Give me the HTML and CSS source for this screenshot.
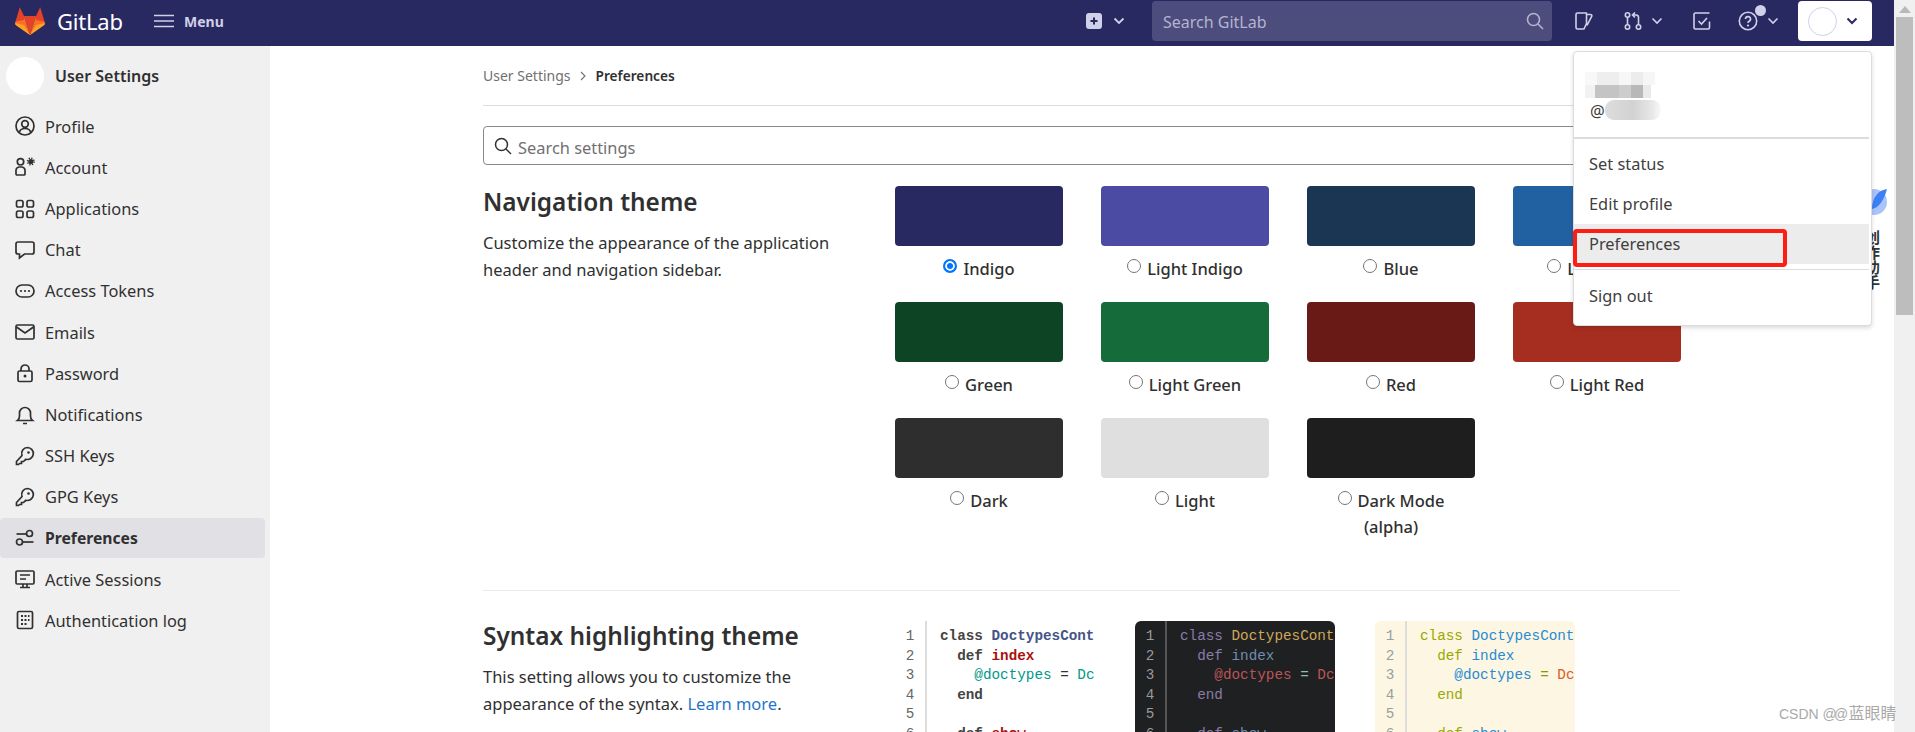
FILE: index.html
```html
<!DOCTYPE html>
<html lang="en">
<head>
<meta charset="utf-8">
<title>Preferences · GitLab</title>
<link rel="stylesheet" href="styles.css">
</head>
<body>
<div class="window">
  <div class="viewport">
    <header class="topbar">
      <div class="brand">
        <svg class="logo" viewBox="0 0 32 30" width="32" height="30"><path d="M16 29 22 10H10Z" fill="#e24329"/><path d="M16 29 10 10 1.5 15.5C.8 17 1 18.5 2.500 19.600Z" fill="#fc6d26"/><path d="M16 29 22 10 30.500 15.500C31.200 17 31 18.500 29.500 19.600Z" fill="#fc6d26"/><path d="M16 29 10 19 1.300 17C1 18 1.500 19 2.500 19.600Z" fill="#fca326"/><path d="M16 29 22 19 30.700 17C31 18 30.500 19 29.500 19.600Z" fill="#fca326"/><path d="M1.500 15.500 5.800 1.300 10 10 10 14Z" fill="#e24329"/><path d="M30.500 15.500 26.200 1.300 22 10 22 14Z" fill="#e24329"/></svg>
        <span class="wordmark">GitLab</span>
      </div>
      <div class="menu-btn">
        <svg width="20" height="14" viewBox="0 0 20 14"><path d="M0 1.500H20M0 7H20M0 12.500H20" stroke="#d1d0e9" stroke-width="1.600" fill="none"/></svg>
        <span>Menu</span>
      </div>
      <div class="top-right">
        <div class="new-btn">
          <svg width="16" height="16" viewBox="0 0 16 16"><rect width="16" height="16" rx="3" fill="#d1d0e9"/><path d="M8 4.500V11.500M4.500 8H11.500" stroke="#292961" stroke-width="2"/></svg>
          <svg class="chev" width="12" height="8" viewBox="0 0 12 8"><path d="M1.500 1.500 6 6l4.500-4.500" stroke="#d1d0e9" stroke-width="1.800" fill="none"/></svg>
        </div>
        <div class="global-search">
          <span>Search GitLab</span>
          <svg width="18" height="18" viewBox="0 0 18 18"><circle cx="7.500" cy="7.500" r="6" stroke="#b5b4cf" stroke-width="1.600" fill="none"/><path d="M12 12l5 5" stroke="#b5b4cf" stroke-width="1.600"/></svg>
        </div>
        <svg class="i-issue" width="18" height="18" viewBox="0 0 18 18"><path d="M1 2.500A1.500 1.500 0 0 1 2.500 1H11.500V11.500L9 17H2.500A1.500 1.500 0 0 1 1 15.500ZM11.500 2.500H15.500A1.300 1.300 0 0 1 16.800 4.200L12 13.500" stroke="#d1d0e9" stroke-width="1.600" stroke-linejoin="round" fill="none"/></svg>
        <div class="mr">
          <svg width="18" height="18" viewBox="0 0 18 18"><g stroke="#d1d0e9" stroke-width="1.600" fill="none"><circle cx="3.500" cy="3" r="2.200"/><circle cx="3.500" cy="15" r="2.200"/><circle cx="14.500" cy="15" r="2.200"/><path d="M3.500 5.200V12.800M14.500 12.800V5.500A2.500 2.500 0 0 0 12 3H9M11 .5 8.500 3 11 5.500"/></g></svg>
          <svg class="chev" width="12" height="8" viewBox="0 0 12 8"><path d="M1.500 1.500 6 6l4.500-4.500" stroke="#d1d0e9" stroke-width="1.600" fill="none"/></svg>
        </div>
        <svg class="i-todo" width="18" height="18" viewBox="0 0 18 18"><path d="M16.500 9.500v6a1.500 1.500 0 0 1-1.500 1.500H2.500A1.500 1.500 0 0 1 1 15.500V2.500A1.500 1.500 0 0 1 2.500 1H16.500M5.500 9l3 3L14 6" stroke="#d1d0e9" stroke-width="1.600" fill="none"/></svg>
        <div class="help">
          <svg width="20" height="20" viewBox="0 0 20 20"><circle cx="10" cy="10" r="8.700" stroke="#d1d0e9" stroke-width="1.600" fill="none"/><path d="M7.500 8a2.500 2.500 0 1 1 3.600 2.300c-.8.400-1.100.9-1.100 1.700" stroke="#d1d0e9" stroke-width="1.700" fill="none"/><circle cx="10" cy="14.500" r="1.100" fill="#d1d0e9"/></svg>
          <span class="help-dot"></span>
          <svg class="chev" width="12" height="8" viewBox="0 0 12 8"><path d="M1.500 1.500 6 6l4.500-4.500" stroke="#d1d0e9" stroke-width="1.600" fill="none"/></svg>
        </div>
        <div class="user-btn">
          <span class="user-avatar"></span>
          <svg width="12" height="8" viewBox="0 0 12 8"><path d="M1.500 1.500 6 6l4.500-4.500" stroke="#292961" stroke-width="2" fill="none"/></svg>
        </div>
      </div>
    </header>
    <div class="below">
      <aside class="sidebar">
        <div class="side-head"><span class="side-avatar"></span><span>User Settings</span></div>
        <nav class="side-nav">
          <a class="nav-item"><svg viewBox="0 0 20 20"><circle cx="10" cy="10" r="9"/><circle cx="10" cy="8" r="3.300"/><path d="M4.200 16.500C5 13.500 7 12.500 10 12.500s5 1 5.800 4"/></svg>Profile</a>
          <a class="nav-item"><svg viewBox="0 0 20 20"><circle cx="5.500" cy="4.800" r="3.200"/><path d="M1 17v-4a3.500 3.500 0 0 1 3-3h3a3.500 3.500 0 0 1 3 3v4a1 1 0 0 1-1 1H2a1 1 0 0 1-1-1Z"/><circle class="solid" cx="15.800" cy="4.500" r="2.600"/><circle class="gear" cx="15.800" cy="4.500" r="3.300"/></svg>Account</a>
          <a class="nav-item"><svg viewBox="0 0 20 20"><rect x="1.500" y="1.500" width="6.500" height="6.500" rx="1.800"/><rect x="12" y="1.500" width="6.500" height="6.500" rx="1.800"/><rect x="1.500" y="12" width="6.500" height="6.500" rx="1.800"/><rect x="12" y="12" width="6.500" height="6.500" rx="1.800"/></svg>Applications</a>
          <a class="nav-item"><svg viewBox="0 0 20 20"><path d="M3 2h14a2 2 0 0 1 2 2v8a2 2 0 0 1-2 2H9.500L4.500 18v-4H3a2 2 0 0 1-2-2V4a2 2 0 0 1 2-2Z"/></svg>Chat</a>
          <a class="nav-item"><svg viewBox="0 0 20 20"><rect x="1" y="4" width="18" height="12" rx="6"/><circle class="solid" cx="6" cy="10" r="1.100"/><circle class="solid" cx="10" cy="10" r="1.100"/><circle class="solid" cx="14" cy="10" r="1.100"/></svg>Access Tokens</a>
          <a class="nav-item"><svg viewBox="0 0 20 20"><rect x="1" y="3" width="18" height="14" rx="1.500"/><path d="M1.500 5 10 11l8.500-6"/></svg>Emails</a>
          <a class="nav-item"><svg viewBox="0 0 20 20"><rect x="3" y="8" width="14" height="10.500" rx="1.500"/><path d="M6 8V6a4 4 0 0 1 8 0v2"/><circle class="solid" cx="10" cy="13" r="1.500"/></svg>Password</a>
          <a class="nav-item"><svg viewBox="0 0 20 20"><path d="M2.500 15.500c1.500-1 2-2.500 2-4.500V8a5.500 5.500 0 0 1 11 0v3c0 2 .5 3.500 2 4.500ZM8 18.500h4"/></svg>Notifications</a>
          <a class="nav-item"><svg viewBox="0 0 20 20"><path d="M12.500 1.500a6 6 0 1 1-1.700 11.800L8.500 15.500H6.500V17.500H4.500L3.500 18.500H1.500V15.500L7 9.500A6 6 0 0 1 12.500 1.500Z"/><circle class="solid" cx="13.500" cy="6.500" r="1.300"/></svg>SSH Keys</a>
          <a class="nav-item"><svg viewBox="0 0 20 20"><path d="M12.500 1.500a6 6 0 1 1-1.700 11.800L8.500 15.500H6.500V17.500H4.500L3.500 18.500H1.500V15.500L7 9.500A6 6 0 0 1 12.500 1.500Z"/><circle class="solid" cx="13.500" cy="6.500" r="1.300"/></svg>GPG Keys</a>
          <a class="nav-item active"><svg viewBox="0 0 20 20"><path d="M1.500 6H11"/><circle cx="14.500" cy="5.500" r="3"/><circle cx="4.500" cy="14" r="3"/><path d="M8 14H18.500"/></svg>Preferences</a>
          <a class="nav-item"><svg viewBox="0 0 20 20"><rect x="1" y="2" width="18" height="13" rx="1.200"/><path d="M5 6H15M5 10H11M8 15v3M12 15v3M5 18.500H15"/></svg>Active Sessions</a>
          <a class="nav-item"><svg viewBox="0 0 20 20"><rect x="2.500" y="1.500" width="15" height="17" rx="1.500"/><path class="dots" d="M6 6H8M9.500 6H11.500M13 6H14.500M6 10H8M9.500 10H11.500M13 10H14.500M6 14H8M9.500 14H11.500"/></svg>Authentication log</a>
        </nav>
      </aside>
      <main class="content">
        <div class="breadcrumb"><span class="crumb">User Settings</span><svg width="8" height="10" viewBox="0 0 8 10"><path d="M2 1l4 4-4 4" stroke="#707070" stroke-width="1.100" fill="none"/></svg><strong>Preferences</strong></div>
        <div class="search-settings">
          <svg width="18" height="18" viewBox="0 0 18 18"><circle cx="7.500" cy="7.500" r="6" stroke="#303030" stroke-width="1.500" fill="none"/><path d="M12 12l5 5" stroke="#303030" stroke-width="1.500"/></svg>
          <span>Search settings</span>
        </div>
        <section class="setting nav-theme">
          <div class="desc">
            <h4>Navigation theme</h4>
            <p>Customize the appearance of the application header and navigation sidebar.</p>
          </div>
          <div class="themes">
            <label class="theme"><span class="swatch indigo"></span><span class="cap"><i class="radio on"></i>Indigo</span></label>
            <label class="theme"><span class="swatch light-indigo"></span><span class="cap"><i class="radio"></i>Light Indigo</span></label>
            <label class="theme"><span class="swatch blue"></span><span class="cap"><i class="radio"></i>Blue</span></label>
            <label class="theme"><span class="swatch light-blue"></span><span class="cap"><i class="radio"></i>Light Blue</span></label>
            <label class="theme"><span class="swatch green"></span><span class="cap"><i class="radio"></i>Green</span></label>
            <label class="theme"><span class="swatch light-green"></span><span class="cap"><i class="radio"></i>Light Green</span></label>
            <label class="theme"><span class="swatch red"></span><span class="cap"><i class="radio"></i>Red</span></label>
            <label class="theme"><span class="swatch light-red"></span><span class="cap"><i class="radio"></i>Light Red</span></label>
            <label class="theme"><span class="swatch dark"></span><span class="cap"><i class="radio"></i>Dark</span></label>
            <label class="theme"><span class="swatch light"></span><span class="cap"><i class="radio"></i>Light</span></label>
            <label class="theme"><span class="swatch dark-mode"></span><span class="cap"><i class="radio"></i>Dark Mode<br>(alpha)</span></label>
          </div>
        </section>
        <hr class="divider">
        <section class="setting syntax-theme">
          <div class="desc">
            <h4>Syntax highlighting theme</h4>
            <p>This setting allows you to customize the appearance of the syntax. <a class="link">Learn more</a>.</p>
          </div>
          <div class="syntax">
            <div class="code c-white"><div class="nums">1<br>2<br>3<br>4<br>5<br>6</div><pre><b class="k">class</b> <b class="t">DoctypesCont</b>
  <b class="k">def</b> <b class="f">index</b>
    <b class="v">@doctypes</b> <b class="o">=</b> <b class="c">Dc</b>
  <b class="k">end</b>

  <b class="k">def</b> <b class="f">show</b></pre></div>
            <div class="code c-dark"><div class="nums">1<br>2<br>3<br>4<br>5<br>6</div><pre><b class="k">class</b> <b class="t">DoctypesCont</b>
  <b class="k">def</b> <b class="f">index</b>
    <b class="v">@doctypes</b> <b class="o">=</b> <b class="c">Dc</b>
  <b class="k">end</b>

  <b class="k">def</b> <b class="f">show</b></pre></div>
            <div class="code c-sol"><div class="nums">1<br>2<br>3<br>4<br>5<br>6</div><pre><b class="k">class</b> <b class="t">DoctypesCont</b>
  <b class="k">def</b> <b class="f">index</b>
    <b class="v">@doctypes</b> <b class="o">=</b> <b class="c">Dc</b>
  <b class="k">end</b>

  <b class="k">def</b> <b class="f">show</b></pre></div>
          </div>
        </section>
      </main>
    </div>
    <div class="dropdown">
      <div class="dd-user"><div class="blur-a"></div><div class="at">@<span class="blur-b"></span></div></div>
      <div class="dd-sep thick"></div>
      <a class="dd-item first">Set status</a>
      <a class="dd-item">Edit profile</a>
      <a class="dd-item hot">Preferences</a>
      <div class="dd-sep"></div>
      <a class="dd-item last">Sign out</a>
    </div>
    <div class="callout"></div>
    <div class="side-tool">
      <svg width="20" height="30" viewBox="0 0 20 30"><circle cx="2" cy="14" r="13" fill="#a9c4fb"/><path d="M15 1C7 2 0 9 0 21c6-1 12-8 15-20Z" fill="#3d7ff5"/></svg>
      <span>创作助手</span>
    </div>
  </div>
  <div class="scrollbar">
    <svg width="12" height="7" viewBox="0 0 12 7"><path d="M6 0l6 7H0Z" fill="#b8b8b8"/></svg>
    <div class="thumb"></div>
  </div>
  <div class="watermark">CSDN <span class="wm-at">@@</span><span class="wm-cn">蓝眼睛</span></div>
</div>
</body>
</html>
```

FILE: styles.css
```css
* { box-sizing: border-box; }
html, body { margin: 0; height: 100%; overflow: hidden; }
body { font-family: "Noto Sans", "Noto Sans CJK SC", sans-serif; color: #303030; font-size: 15px; background: #fff; }
.window { position: relative; display: flex; height: 732px; }
.viewport { position: relative; flex: 1; min-width: 0; display: flex; flex-direction: column; overflow: hidden; }

.topbar { height: 46px; flex: none; background: #292961; display: flex; align-items: center; padding: 0 0 4px 14px; }
.brand { display: flex; align-items: center; gap: 11px; width: 140px; }
.logo { display: block; }
.wordmark { color: #fff; font-size: 22px; line-height: 1; letter-spacing: -.2px; }
.menu-btn { display: flex; align-items: center; gap: 10px; color: #d1d0e9; font-size: 14px; font-weight: 700; }
.top-right { margin-left: auto; display: flex; align-items: center; height: 42px; }
.new-btn { display: flex; align-items: center; gap: 11px; margin-right: 27px; }
.global-search { width: 400px; height: 40px; background: #4c4c7d; border-radius: 4px; display: flex; align-items: center; justify-content: space-between; padding: 0 8px 0 11px; color: #b5b4cf; font-size: 16px; margin-right: 23px; }
.global-search span { padding-top: 2px; }
.i-issue { margin-right: 31px; }
.mr { display: flex; align-items: center; gap: 9px; margin-right: 30px; }
.i-todo { margin-right: 27px; }
.help { position: relative; display: flex; align-items: center; gap: 9px; margin-right: 19px; }
.help-dot { position: absolute; left: 17px; top: -6px; width: 11px; height: 11px; background: #d1d0e9; border-radius: 50%; }
.user-btn { width: 74px; height: 40px; background: #fff; border-radius: 4px; display: flex; align-items: center; padding-left: 10px; gap: 9px; margin-right: 22px; }
.user-avatar { width: 29px; height: 29px; border: 1px solid #d1d0e9; border-radius: 50%; }

.below { flex: 1; min-height: 0; display: flex; }
.sidebar { width: 270px; flex: none; background: #f0f0f0; padding-top: 11px; }
.side-head { display: flex; align-items: center; gap: 11px; padding-left: 6px; height: 38px; font-size: 16px; font-weight: 600; color: #303030; }
.side-avatar { width: 38px; height: 38px; background: #fff; border-radius: 50%; }
.side-nav { display: flex; flex-direction: column; padding-top: 10.600px; padding-right: 5px; }
.nav-item { height: 41.200px; display: flex; align-items: center; gap: 10px; padding-left: 15px; font-size: 16.400px; color: #303030; border-radius: 4px; }
.nav-item svg { width: 20px; height: 20px; flex: none; fill: none; stroke: #303030; stroke-width: 1.700; }
.nav-item svg .solid { fill: #303030; stroke: none; }
.nav-item svg .gear { stroke-width: 1.400; stroke-dasharray: 1.300 1.300; }
.nav-item svg .dots { stroke-width: 1.800; }
.nav-item.active { background: #e1e1e5; font-weight: 700; font-size: 15.700px; height: 40px; margin: .6px 0; }

.content { flex: 1; min-width: 0; padding: 0 214px 0 213px; overflow: hidden; }
.breadcrumb { height: 60px; border-bottom: 1px solid #dcdcde; display: flex; align-items: center; gap: 9px; font-size: 14px; color: #707070; }
.crumb { margin-right: -1px; }
.breadcrumb strong { color: #303030; font-weight: 600; font-size: 13.700px; }
.search-settings { margin-top: 20px; height: 39px; border: 1px solid #89888d; border-radius: 4px; display: flex; align-items: center; gap: 6px; padding-left: 10px; font-size: 16.400px; color: #707070; }
.search-settings span { padding-top: 3px; }
.setting { display: flex; }
.desc { width: 412px; flex: none; }
.desc h4 { margin: 0; font-size: 24.400px; font-weight: 600; line-height: 32px; color: #303030; }
.desc p { margin: 11px 0 0; font-size: 16.500px; line-height: 27px; color: #303030; width: 360px; }
.link { color: #1f75cb; }
.nav-theme { margin-top: 21px; height: 404px; }
.themes { display: grid; grid-template-columns: repeat(4, 168px); column-gap: 38px; grid-auto-rows: 116px; }
.theme { display: flex; flex-direction: column; align-items: center; }
.swatch { width: 168px; height: 60px; flex: none; border-radius: 4px; display: block; }
.indigo { background: #292961; }
.light-indigo { background: #4b4ba3; }
.blue { background: #1a3652; }
.light-blue { background: #2261a1; }
.green { background: #0d4524; }
.light-green { background: #156b39; }
.red { background: #691a16; }
.light-red { background: #a62e21; }
.dark { background: #2e2e2e; }
.light { background: #dfdfdf; }
.dark-mode { background: #1e1e1e; }
.cap { flex: none; margin-top: 10.400px; font-size: 16.500px; font-weight: 500; line-height: 26px; text-align: center; color: #303030; }
.radio { display: inline-block; width: 14px; height: 14px; border: 1px solid #767676; border-radius: 50%; background: #fff; margin-right: 6px; vertical-align: 2px; }
.radio.on { border: 2px solid #0075ff; box-shadow: inset 0 0 0 2px #fff; background: #0075ff; }
.divider { border: 0; border-top: 1px solid #e9e9ea; margin: 0; }
.syntax-theme { margin-top: 29px; }
.syntax { display: flex; gap: 40px; margin-top: 1px; }
.code { width: 200px; height: 400px; flex: none; display: flex; border-radius: 6px; overflow: hidden; font-family: "Liberation Mono", monospace; font-size: 14.300px; line-height: 19.600px; padding-top: 6px; }
.nums { width: 32px; flex: none; text-align: center; border-right: 2px solid #ddd; height: 100%; margin-top: -6px; padding-top: 6px; }
.code pre { margin: 0 0 0 13px; font: inherit; }
.code b { font-weight: 400; }
.c-white .nums { color: #666; }
.c-white .k { color: #444; font-weight: 700; }
.c-white .t { color: #458; font-weight: 700; }
.c-white .f { color: #a11; font-weight: 700; }
.c-white .v { color: #098; }
.c-white .o { color: #333; }
.c-white .c { color: #098; }
.c-dark { background: #1f2022; }
.c-dark .nums { color: #9a9a9a; border-color: #555; }
.c-dark .k { color: #8a7ca8; }
.c-dark .t { color: #d0a75a; }
.c-dark .f { color: #6f8db0; }
.c-dark .v { color: #b55; }
.c-dark .o { color: #8abeb7; }
.c-dark .c { color: #b55; }
.c-sol { background: #fdf6e3; }
.c-sol .nums { color: #93a1a1; border-color: #ddd; }
.c-sol .k { color: #99a800; }
.c-sol .t { color: #268bd2; }
.c-sol .f { color: #268bd2; }
.c-sol .v { color: #268bd2; }
.c-sol .o { color: #859900; }
.c-sol .c { color: #dc5a2a; }

.dropdown { position: absolute; z-index: 3; left: 1573px; top: 51px; width: 299px; height: 275px; background: #fff; border: 1px solid #dcdcde; border-radius: 4px; box-shadow: 0 2px 4px rgba(0,0,0,.15); padding-right: 2px; font-size: 16.400px; color: #404040; }
.dd-user { height: 85px; padding: 20px 0 0 11px; }
.blur-a { width: 70px; height: 13px; background: linear-gradient(90deg,#f8f8f8 0 12px,#eee 12px 34px,#f7f7f7 34px 46px,#ececec 46px 58px,#f6f6f6 58px); }
.blur-a::after { content: ""; display: block; width: 66px; height: 13px; transform: translateY(13px); background: linear-gradient(90deg,#f2f2f2 0 10px,#c4c4c4 10px 34px,#cdcdcd 34px 46px,#b8b8b8 46px 58px,#eaeaea 58px); }
.at { margin: 15px 0 0 5px; line-height: 22px; display: flex; align-items: center; }
.blur-b { display: block; width: 56px; height: 20px; margin-top: -3px; background: linear-gradient(90deg,#ddd,#d2d2d2 50%,#e8e8e8 85%,#fafafa); border-radius: 9px; }
.dd-sep { height: 1px; background: #dcdcde; }
.dd-sep.thick { height: 2px; }
.dd-item { display: flex; align-items: center; height: 40px; padding: 0 0 1px 15px; }
.dd-item.first { margin-top: 5px; }
.dd-item.hot { background: #ececec; margin-bottom: 5px; }
.dd-item.last { margin-top: 6px; }
.callout { position: absolute; z-index: 4; left: 1573px; top: 229px; width: 214px; height: 38px; border: 4px solid #fc1e12; border-radius: 4px; }
.side-tool { position: absolute; z-index: 2; right: 0; top: 176px; width: 22px; height: 125px; background: #fff; display: flex; flex-direction: column; align-items: flex-start; }
.side-tool svg { margin-top: 12px; flex: none; }
.side-tool span { writing-mode: vertical-rl; font-size: 15px; font-weight: 700; margin: 12px 0 0 -8px; color: #333; line-height: 16px; white-space: nowrap; }
.watermark { position: absolute; z-index: 5; left: 1779px; top: 704px; color: #a9a9a9; font-size: 14px; line-height: 20px; white-space: nowrap; font-family: "Liberation Sans", "Noto Sans CJK SC", sans-serif; }
.wm-at { letter-spacing: -2.700px; }
.wm-cn { font-size: 16px; margin-left: 3px; }

.scrollbar { width: 21px; flex: none; background: #f0f0f0; display: flex; flex-direction: column; align-items: center; padding-top: 6px; }
.thumb { width: 17px; height: 298px; background: #bdbdbd; margin-top: 4px; }
```
